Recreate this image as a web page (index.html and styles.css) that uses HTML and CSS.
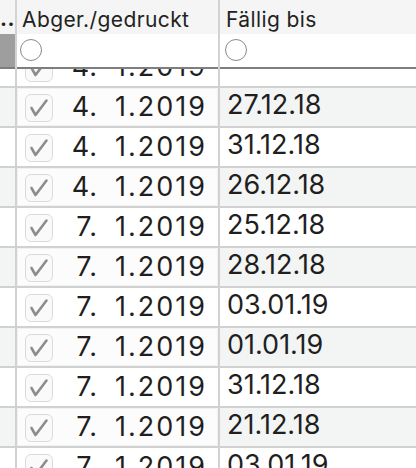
FILE: index.html
```html
<!DOCTYPE html>
<html>
<head>
<meta charset="utf-8">
<link rel="stylesheet" href="styles.css">
</head>
<body>
<div class="table">
  <div class="head">
    <div class="hcell hfirst">..</div>
    <div class="hcell">Abger./gedruckt</div>
    <div class="hcell hlast">Fällig bis</div>
    <div class="fcell fcell-first"><div class="fblock"></div></div>
    <div class="fcell"><span class="radio"></span></div>
    <div class="fcell fcell-last"><span class="radio"></span></div>
  </div>
  <div class="body">
    <div class="rows">
      <div class="row"><div class="c1"></div><div class="c2"><span class="cb"><svg viewBox="0 0 28 28" width="28" height="28"><path d="M6.5 14 L10.5 21 L21.5 6.5" /></svg></span><span class="day"><span class="dd">4.</span>1.2019</span></div><div class="c3"></div></div>
      <div class="row alt"><div class="c1"></div><div class="c2"><span class="cb"><svg viewBox="0 0 28 28" width="28" height="28"><path d="M6.5 14 L10.5 21 L21.5 6.5" /></svg></span><span class="day"><span class="dd">4.</span>1.2019</span></div><div class="c3">27.12.18</div></div>
      <div class="row"><div class="c1"></div><div class="c2"><span class="cb"><svg viewBox="0 0 28 28" width="28" height="28"><path d="M6.5 14 L10.5 21 L21.5 6.5" /></svg></span><span class="day"><span class="dd">4.</span>1.2019</span></div><div class="c3">31.12.18</div></div>
      <div class="row alt"><div class="c1"></div><div class="c2"><span class="cb"><svg viewBox="0 0 28 28" width="28" height="28"><path d="M6.5 14 L10.5 21 L21.5 6.5" /></svg></span><span class="day"><span class="dd">4.</span>1.2019</span></div><div class="c3">26.12.18</div></div>
      <div class="row"><div class="c1"></div><div class="c2"><span class="cb"><svg viewBox="0 0 28 28" width="28" height="28"><path d="M6.5 14 L10.5 21 L21.5 6.5" /></svg></span><span class="day"><span class="dd">7.</span>1.2019</span></div><div class="c3">25.12.18</div></div>
      <div class="row alt"><div class="c1"></div><div class="c2"><span class="cb"><svg viewBox="0 0 28 28" width="28" height="28"><path d="M6.5 14 L10.5 21 L21.5 6.5" /></svg></span><span class="day"><span class="dd">7.</span>1.2019</span></div><div class="c3">28.12.18</div></div>
      <div class="row"><div class="c1"></div><div class="c2"><span class="cb"><svg viewBox="0 0 28 28" width="28" height="28"><path d="M6.5 14 L10.5 21 L21.5 6.5" /></svg></span><span class="day"><span class="dd">7.</span>1.2019</span></div><div class="c3">03.01.19</div></div>
      <div class="row alt"><div class="c1"></div><div class="c2"><span class="cb"><svg viewBox="0 0 28 28" width="28" height="28"><path d="M6.5 14 L10.5 21 L21.5 6.5" /></svg></span><span class="day"><span class="dd">7.</span>1.2019</span></div><div class="c3">01.01.19</div></div>
      <div class="row"><div class="c1"></div><div class="c2"><span class="cb"><svg viewBox="0 0 28 28" width="28" height="28"><path d="M6.5 14 L10.5 21 L21.5 6.5" /></svg></span><span class="day"><span class="dd">7.</span>1.2019</span></div><div class="c3">31.12.18</div></div>
      <div class="row alt"><div class="c1"></div><div class="c2"><span class="cb"><svg viewBox="0 0 28 28" width="28" height="28"><path d="M6.5 14 L10.5 21 L21.5 6.5" /></svg></span><span class="day"><span class="dd">7.</span>1.2019</span></div><div class="c3">21.12.18</div></div>
      <div class="row"><div class="c1"></div><div class="c2"><span class="cb"><svg viewBox="0 0 28 28" width="28" height="28"><path d="M6.5 14 L10.5 21 L21.5 6.5" /></svg></span><span class="day"><span class="dd">7.</span>1.2019</span></div><div class="c3">03.01.19</div></div>
    </div>
  </div>
</div>
</body>
</html>
```
FILE: styles.css
```css
html, body {
  margin: 0;
  padding: 0;
  background: #ffffff;
}
body {
  width: 416px;
  height: 468px;
  overflow: hidden;
  font-family: "Inter", "Liberation Sans", sans-serif;
  color: #222222;
}
.table {
  width: 416px;
  height: 468px;
  display: flex;
  flex-direction: column;
}
.head {
  display: grid;
  grid-template-columns: 15px 201px 1fr;
  grid-template-rows: 34px 35px;
  column-gap: 2px;
  background: #d3d3d3;
}
.hcell {
  background: #f5f5f5;
  font-size: 21px;
  line-height: 26px;
  height: 34px;
  box-sizing: border-box;
  padding-top: 7px;
  padding-left: 5px;
  white-space: nowrap;
  letter-spacing: 0.4px;
}
.hfirst {
  padding-left: 0;
  padding-top: 6px;
  font-weight: 700;
  overflow: hidden;
}
.hlast {
  padding-left: 6px;
}
.fcell {
  background: #ffffff;
  border-bottom: 2px solid #7e7e7e;
  padding-left: 3px;
  padding-top: 5px;
  box-sizing: border-box;
}
.fcell-first {
  padding: 0;
  background: #ffffff;
}
.fblock {
  height: 33px;
  background: #9e9e9e;
}
.fcell-last {
  padding-left: 5px;
}
.radio {
  display: block;
  width: 20px;
  height: 20px;
  border: 1px solid #8a8a8a;
  border-radius: 50%;
  background: #ffffff;
}
.body {
  flex: 1;
  overflow: hidden;
}
.rows {
  margin-top: -21px;
}
.row {
  display: grid;
  grid-template-columns: 15px 201px 1fr;
  column-gap: 2px;
  background: #d1d1d1;
  border-bottom: 2px solid #d1d1d1;
  height: 38px;
}
.row > div {
  background: #ffffff;
}
.row.alt .c1, .row.alt .c3 {
  background: #f3f4f4;
}
.row.alt .c2 {
  background: #fcfcfc;
  box-shadow: inset 0 0 0 1px #f1f2f2;
}
.c2 {
  display: flex;
  align-items: center;
  padding-left: 8px;
  padding-right: 11px;
}
.cb {
  width: 26px;
  height: 26px;
  border: 1px solid #dadada;
  border-radius: 6px;
  background: #fafafa;
  display: block;
  position: relative;
  top: 1px;
}
.cb svg {
  display: block;
  margin: -1px;
}
.cb path {
  fill: none;
  stroke: #8d8d8d;
  stroke-width: 2.6;
  stroke-linecap: round;
  stroke-linejoin: round;
}
.day {
  margin-left: auto;
  white-space: pre;
  font-size: 27px;
  letter-spacing: 2px;
  line-height: 34px;
  color: #1f1f1f;
}
.dd {
  margin-right: 17px;
  letter-spacing: 1px;
}
.c3 {
  font-size: 27px;
  line-height: 34px;
  padding-left: 7px;
  color: #1f1f1f;
}
```
